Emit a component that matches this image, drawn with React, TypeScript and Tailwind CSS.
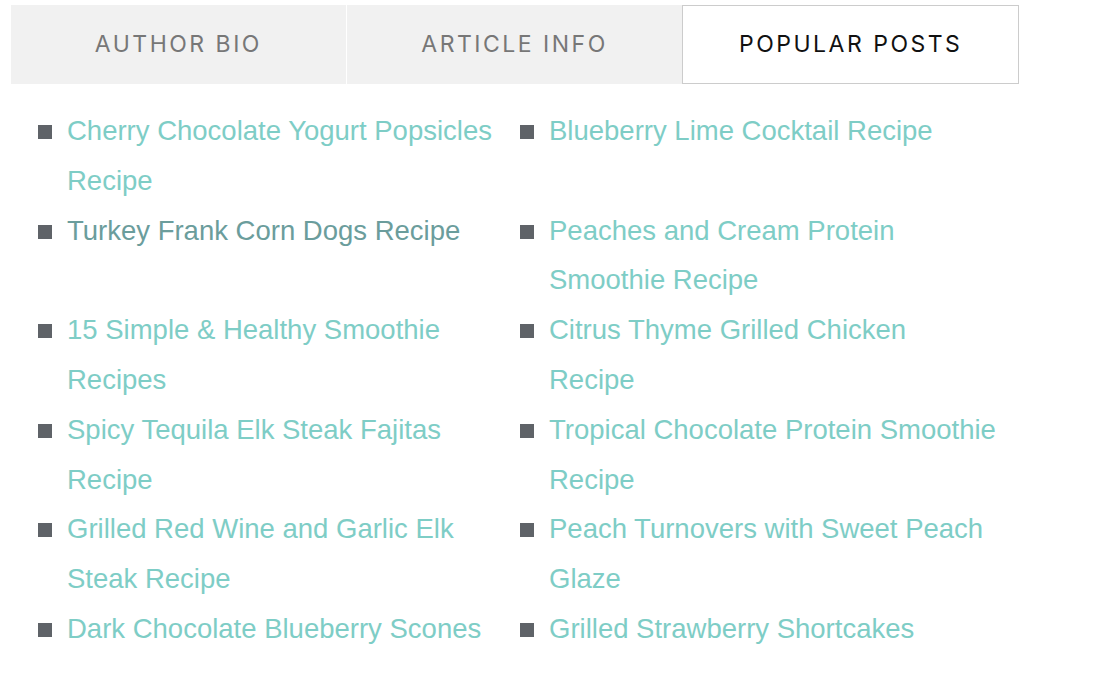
import React from "react";

const left = [
  { t: "Cherry Chocolate Yogurt Popsicles Recipe" },
  { t: "Turkey Frank Corn Dogs Recipe", dark: true },
  { t: "15 Simple & Healthy Smoothie Recipes" },
  { t: "Spicy Tequila Elk Steak Fajitas Recipe" },
  { t: "Grilled Red Wine and Garlic Elk Steak Recipe" },
  { t: "Dark Chocolate Blueberry Scones" },
];
const right = [
  { t: "Blueberry Lime Cocktail Recipe" },
  { t: "Peaches and Cream Protein Smoothie Recipe" },
  { t: "Citrus Thyme Grilled Chicken Recipe" },
  { t: "Tropical Chocolate Protein Smoothie Recipe" },
  { t: "Peach Turnovers with Sweet Peach Glaze" },
  { t: "Grilled Strawberry Shortcakes" },
];

function Item({ t, dark }: { t: string; dark?: boolean }) {
  return (
    <div className="flex items-start">
      <span className="mt-[19px] ml-[1px] w-[14px] h-[14px] bg-[#5f6368] shrink-0" />
      <a
        className={
          "ml-[15px] w-[447px] text-[27.5px] leading-[49.8px] " +
          (dark ? "text-[#6b9d9c]" : "text-[#7ecdc6]")
        }
        style={{ fontFamily: '"Liberation Sans", Arial, sans-serif' }}
      >
        {t}
      </a>
    </div>
  );
}

export default function App() {
  const rows = left.map((l, i) => [l, right[i]]);
  return (
    <div className="w-[1097px] h-[679px] bg-white overflow-hidden">
      <div className="pt-[5px] pl-[11px]">
        <div
          className="flex w-[1008px] h-[79px]"
          style={{ fontFamily: "Inter, 'Open Sans', sans-serif" }}
        >
          <div className="w-[335px] bg-[#f1f1f1] flex items-center justify-center text-[23px] tracking-[2.5px] text-[#777777] font-normal">
            AUTHOR BIO
          </div>
          <div className="w-[1px] bg-white" />
          <div className="w-[336px] bg-[#f1f1f1] flex items-center justify-center text-[23px] tracking-[2.5px] text-[#777777]">
            ARTICLE INFO
          </div>
          <div className="w-[337px] bg-white border border-[#cccccc] flex items-center justify-center text-[23px] tracking-[2.5px] text-[#111111]">
            POPULAR POSTS
          </div>
        </div>
      </div>
      <div className="pl-[37px] pt-[22px] w-[1002px] grid grid-cols-[482px_482px]">
        {rows.map(([l, r], i) => (
          <React.Fragment key={i}>
            <Item {...l} />
            <Item {...r} />
          </React.Fragment>
        ))}
      </div>
    </div>
  );
}
